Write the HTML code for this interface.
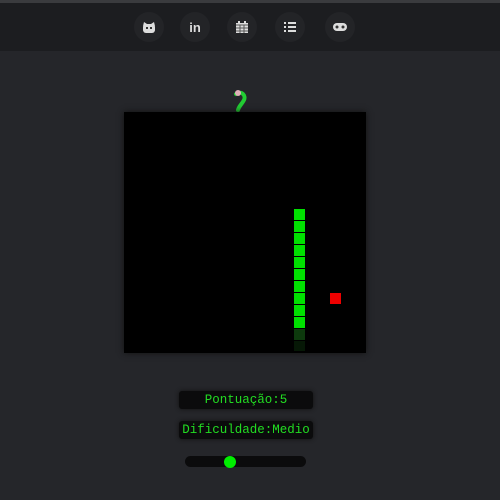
<!DOCTYPE html>
<html><head><style>
body{margin:0;width:500px;height:500px;background:#25262a;position:relative;overflow:hidden;font-family:"Liberation Mono",monospace}
.top{position:absolute;left:0;top:0;width:500px;height:3px;background:#3a3b3e}
.hdr{position:absolute;left:0;top:3px;width:500px;height:48px;background:#1c1d20}
.ic{position:absolute;top:12px;width:30px;height:30px;border-radius:50%;background:#232427;color:#ddd;font:bold 13px "Liberation Sans",sans-serif;display:flex;align-items:center;justify-content:center}
.board{position:absolute;left:124px;top:112px;width:242px;height:241px;background:#000;box-shadow:0 0 6px #111}
.s{position:absolute;left:170px;width:11px;height:11px;background:#00e000}
.box{position:absolute;left:179px;width:134px;height:18px;background:#0b0b0c;border-radius:3px;color:#22dd22;font-size:12.5px;text-align:center;line-height:18px;box-shadow:0 0 4px #111}
</style></head><body>
<div class="top"></div><div class="hdr"></div>
<div class="ic" style="left:134px"><svg width="12" height="11"><rect x="0" y="2" width="12" height="9" rx="3" fill="#ddd"/><path d="M0 4L1 0L4 2M12 4L11 0L8 2" fill="#ddd"/><rect x="3" y="5" width="2" height="2" fill="#333"/><rect x="7" y="5" width="2" height="2" fill="#333"/></svg></div>
<div class="ic" style="left:180px">in</div>
<div class="ic" style="left:227px"><svg width="12" height="12"><rect x="0" y="2" width="12" height="10" fill="#ddd"/><rect x="2" y="0" width="2" height="3" fill="#ddd"/><rect x="8" y="0" width="2" height="3" fill="#ddd"/><path d="M0 4H12M0 7H12M0 10H12M4 4V12M8 4V12" stroke="#555" stroke-width="1"/></svg></div>
<div class="ic" style="left:275px"><svg width="12" height="10"><path d="M0 1H2M4 1H12M0 5H2M4 5H12M0 9H2M4 9H12" stroke="#ddd" stroke-width="2"/></svg></div>
<div class="ic" style="left:325px"><svg width="14" height="8"><rect x="0" y="0" width="14" height="8" rx="4" fill="#ddd"/><circle cx="4" cy="4" r="1.5" fill="#333"/><circle cx="10" cy="4" r="1.5" fill="#333"/></svg></div>
<svg style="position:absolute;left:230px;top:88px" width="20" height="24"><path d="M6 6C12 2 16 8 14 12C12 16 9 18 8 22" stroke="#22cc33" stroke-width="4" fill="none" stroke-linecap="round"/><circle cx="8" cy="5" r="3" fill="#e0b0b8"/></svg>
<div class="board">
<div class="s" style="top:97px"></div><div class="s" style="top:109px"></div><div class="s" style="top:121px"></div><div class="s" style="top:133px"></div><div class="s" style="top:145px"></div><div class="s" style="top:157px"></div><div class="s" style="top:169px"></div><div class="s" style="top:181px"></div><div class="s" style="top:193px"></div><div class="s" style="top:205px"></div>
<div class="s" style="top:217px;background:#0d3a0d"></div><div class="s" style="top:229px;height:10px;background:#061806"></div>
<div style="position:absolute;left:206px;top:181px;width:11px;height:11px;background:#ee0000"></div>
</div>
<div class="box" style="top:391px">Pontuação:5</div>
<div class="box" style="top:421px">Dificuldade:Medio</div>
<div style="position:absolute;left:185px;top:456px;width:121px;height:11px;border-radius:6px;background:#0b0b0c"></div>
<div style="position:absolute;left:224px;top:456px;width:12px;height:12px;border-radius:50%;background:#00ee00"></div>
</body></html>
